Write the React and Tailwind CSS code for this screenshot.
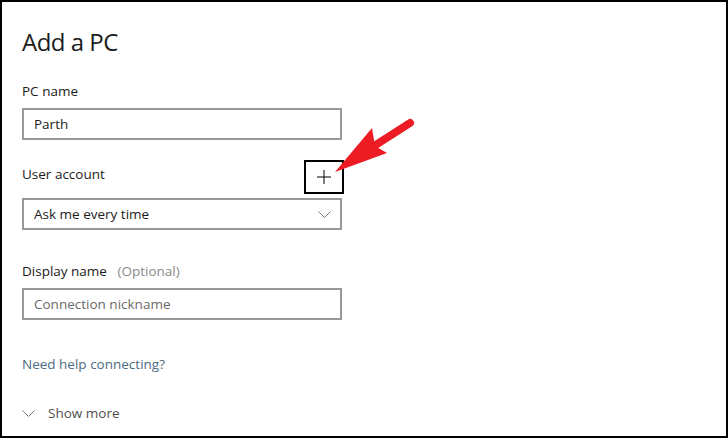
import React from 'react'

function Chevron({ className }) {
  return (
    <svg className={className} width="13" height="7" viewBox="0 0 13 7" fill="none">
      <polyline points="0.5,0.5 6.5,6.5 12.5,0.5" stroke="#7a7a7a" strokeWidth="1" />
    </svg>
  )
}

export default function App() {
  return (
    <div className="relative w-[728px] h-[438px] border-2 border-black bg-white pl-[20px] pt-[24px] text-[#1b1b1b] font-['Open_Sans',sans-serif]">
      {/* Title */}
      <h1 className="text-[24px] leading-[32px] font-normal tracking-[-0.5px] text-[#1b1b1b]">Add a PC</h1>

      {/* PC name */}
      <label className="block mt-[23px] text-[13.5px] leading-[20px]">PC name</label>
      <div className="mt-[7px] w-[320px] h-[32px] border-2 border-[#999999] flex items-center px-[10px] text-[13.5px]">
        Parth
      </div>

      {/* User account */}
      <div className="mt-[20px] w-[322px] h-[34px] flex items-start justify-between">
        <span className="mt-[4px] text-[13.5px] leading-[20px]">User account</span>
        <button className="w-[40px] h-[34px] border-2 border-black flex items-center justify-center">
          <svg width="16" height="16" viewBox="0 0 16 16">
            <line x1="8" y1="1" x2="8" y2="15" stroke="#000" strokeWidth="1" />
            <line x1="1" y1="8" x2="15" y2="8" stroke="#000" strokeWidth="1" />
          </svg>
        </button>
      </div>
      <div className="mt-[4px] w-[320px] h-[32px] border-2 border-[#999999] flex items-center justify-between pl-[10px] pr-[9px] text-[13.5px]">
        <span>Ask me every time</span>
        <Chevron />
      </div>

      {/* Display name */}
      <div className="mt-[31px] text-[13.5px] leading-[20px]">
        Display name <span className="ml-[7px] text-[#8a8a8a]">(Optional)</span>
      </div>
      <div className="mt-[7px] w-[320px] h-[32px] border-2 border-[#999999] flex items-center px-[10px] text-[13.5px] text-[#6b6b6b]">
        Connection nickname
      </div>

      {/* Help link */}
      <a className="block mt-[34px] text-[13.5px] leading-[20px] text-[#4e6a80]">Need help connecting?</a>

      {/* Show more */}
      <div className="mt-[29px] flex items-center gap-[13px] text-[13.5px] leading-[20px] text-[#505050]">
        <Chevron />
        <span>Show more</span>
      </div>

      {/* Red annotation arrow */}
      <svg
        className="absolute left-[-2px] top-[-2px] pointer-events-none"
        width="728"
        height="438"
        viewBox="0 0 728 438"
      >
        <line x1="374" y1="146" x2="410" y2="123" stroke="#ed1c24" strokeWidth="8" strokeLinecap="round" />
        <polygon points="335,172 372,128 375,146 387,153" fill="#ed1c24" />
      </svg>
    </div>
  )
}
